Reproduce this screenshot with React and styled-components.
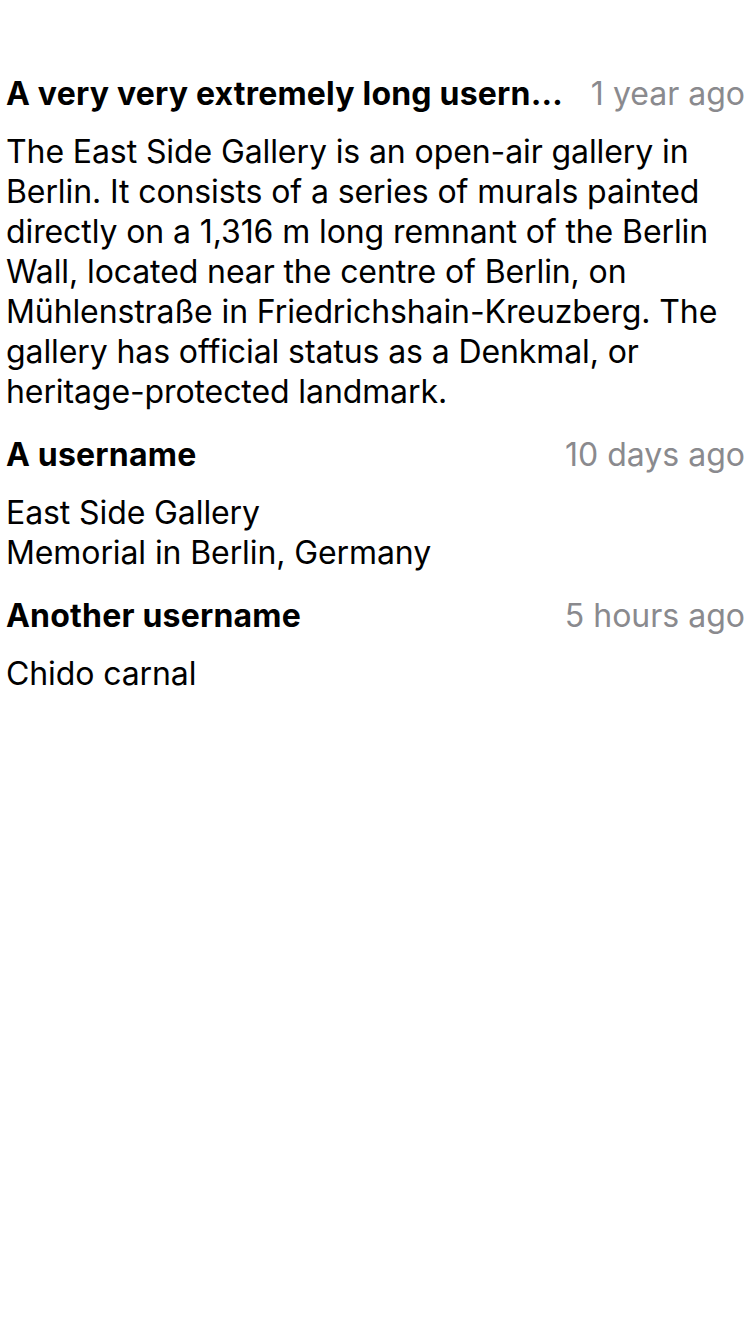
import React from "react";
import styled, { createGlobalStyle } from "styled-components";

const Global = createGlobalStyle`
  html, body { margin: 0; padding: 0; background: #fff; }
  body { font-family: Inter, "Noto Sans", sans-serif; color: #000; -webkit-font-smoothing: antialiased; }
`;

const List = styled.div`
  display: flex;
  flex-direction: column;
  gap: 22px;
  padding: 73px 5px 0 6px;
`;

const Item = styled.div`
  display: flex;
  flex-direction: column;
  gap: 19px;
`;

const Header = styled.div`
  display: flex;
  align-items: center;
  justify-content: space-between;
  gap: 22px;
  height: 40px;
`;

const Name = styled.div`
  font-weight: 700;
  font-size: 32px;
  letter-spacing: 0.2px;
  white-space: nowrap;
  overflow: hidden;
  text-overflow: ellipsis;
  min-width: 0;
`;

const Time = styled.div`
  font-size: 32px;
  color: #8a8a8e;
  letter-spacing: 0px;
  white-space: nowrap;
  flex-shrink: 0;
`;

const Body = styled.div`
  font-size: 32px;
  line-height: 40px;
  letter-spacing: -0.1px;
  white-space: pre-line;
`;

const comments = [
  {
    name: "A very very extremely long username that goes on",
    time: "1 year ago",
    text:
      "The East Side Gallery is an open-air gallery in Berlin. It consists of a series of murals painted directly on a 1,316 m long remnant of the Berlin Wall, located near the centre of Berlin, on Mühlenstraße in Friedrichshain-Kreuzberg. The gallery has official status as a Denkmal, or heritage-protected landmark.",
  },
  {
    name: "A username",
    time: "10 days ago",
    text: "East Side Gallery\nMemorial in Berlin, Germany",
  },
  { name: "Another username", time: "5 hours ago", text: "Chido carnal" },
];

export default function App() {
  return (
    <>
      <Global />
      <List>
        {comments.map((c, i) => (
          <Item key={i}>
            <Header>
              <Name>{c.name}</Name>
              <Time>{c.time}</Time>
            </Header>
            <Body>{c.text}</Body>
          </Item>
        ))}
      </List>
    </>
  );
}
